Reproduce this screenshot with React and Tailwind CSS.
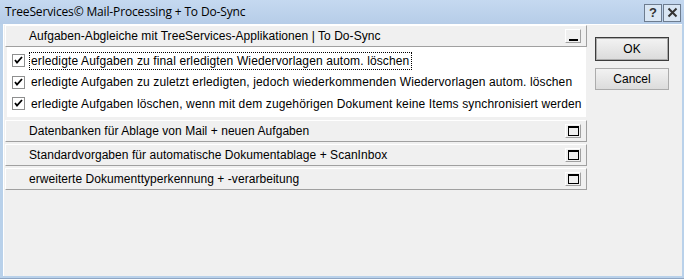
const options = [
  'erledigte Aufgaben zu final erledigten Wiedervorlagen autom. löschen',
  'erledigte Aufgaben zu zuletzt erledigten, jedoch wiederkommenden Wiedervorlagen autom. löschen',
  'erledigte Aufgaben löschen, wenn mit dem zugehörigen Dokument keine Items synchronisiert werden',
];

const sections = [
  'Datenbanken für Ablage von Mail + neuen Aufgaben',
  'Standardvorgaben für automatische Dokumentablage + ScanInbox',
  'erweiterte Dokumenttyperkennung + -verarbeitung',
];

function Check() {
  return (
    <span className="w-[13px] h-[13px] border border-[#8e8f8f] bg-white flex items-center justify-center shrink-0">
      <svg width="9" height="9" viewBox="0 0 9 9">
        <path d="M1 4 L3 6.5 L8 1" fill="none" stroke="#000" strokeWidth="1.8" />
      </svg>
    </span>
  );
}

function PanelButton({ kind }) {
  return (
    <span className="w-[16px] h-[14px] border border-t-white border-l-white border-r-[#a0a0a0] border-b-[#a0a0a0] flex items-center justify-center">
      {kind === 'min' ? (
        <span className="w-[9px] h-[9px] border-b-2 border-black" />
      ) : (
        <span className="w-[11px] h-[10px] border border-t-2 border-black" />
      )}
    </span>
  );
}

function SectionHeader({ title, kind }) {
  return (
    <div className="h-[22px] flex items-center justify-between pl-[23px] pr-[5px] border border-t-white border-l-white border-r-[#a0a0a0] border-b-[#a0a0a0]">
      <span className="tracking-[0.05px]">{title}</span>
      <PanelButton kind={kind} />
    </div>
  );
}

export default function App() {
  return (
    <div className="w-[684px] h-[279px] bg-[#b9d1ea] flex flex-col border-b border-[#8ea6c4] text-[12px] text-black font-['Liberation_Sans',Arial,sans-serif]">
      {/* title bar */}
      <div className="h-[24px] flex items-center justify-between pl-[5px] pr-[3px] bg-gradient-to-b from-[#c5d9f0] to-[#b6cde8]">
        <span className="font-['Open_Sans',sans-serif] text-[12px] tracking-[-0.15px]">TreeServices© Mail-Processing + To Do-Sync</span>
        <div className="flex gap-[1px] mt-[1px]">
          <span className="w-[18px] h-[18px] border border-[#6d7c8f] bg-[#d9e6f4] flex items-center justify-center font-bold text-[13px] text-[#333]">?</span>
          <span className="w-[18px] h-[18px] border border-[#6d7c8f] bg-[#d9e6f4] flex items-center justify-center">
            <svg width="11" height="11" viewBox="0 0 11 11">
              <path d="M1.5 1.5 L9.5 9.5 M9.5 1.5 L1.5 9.5" stroke="#333" strokeWidth="2" />
            </svg>
          </span>
        </div>
      </div>

      {/* client area */}
      <div className="flex-1 ml-[3px] mr-[2px] mb-[2px] bg-[#f0f0f0] border-t border-l border-white flex">
        <div className="w-[582px] ml-[1px] flex flex-col">
          <SectionHeader title="Aufgaben-Abgleiche mit TreeServices-Applikationen | To Do-Sync" kind="min" />
          <div className="bg-white ml-[2px] mr-[1px] pt-[3px] pb-[2px] flex flex-col tracking-[0.13px]">
            {options.map((label, i) => (
              <div key={label} className="h-[21.5px] flex items-center pl-[5px] gap-[4px]">
                <Check />
                <span className={i === 0 ? 'border border-dotted border-black px-[1px] leading-[16px] pr-[2px]' : 'pl-[2px]'}>
                  {label}
                </span>
              </div>
            ))}
          </div>
          <div className="mt-[3px] flex flex-col gap-[2px]">
            {sections.map((s) => (
              <SectionHeader key={s} title={s} kind="max" />
            ))}
          </div>
        </div>

        <div className="flex flex-col items-center ml-[8px] pt-[12px] gap-[7px]">
          <button className="w-[74px] h-[24px] border border-[#3c3c3c] p-0 flex">
            <span className="flex-1 border border-[#acacac] bg-gradient-to-b from-[#f2f2f2] to-[#dcdcdc] flex items-center justify-center">
              OK
            </span>
          </button>
          <button className="w-[74px] h-[22px] border border-[#acacac] bg-gradient-to-b from-[#f2f2f2] to-[#dcdcdc] flex items-center justify-center">
            Cancel
          </button>
        </div>
      </div>
    </div>
  );
}
